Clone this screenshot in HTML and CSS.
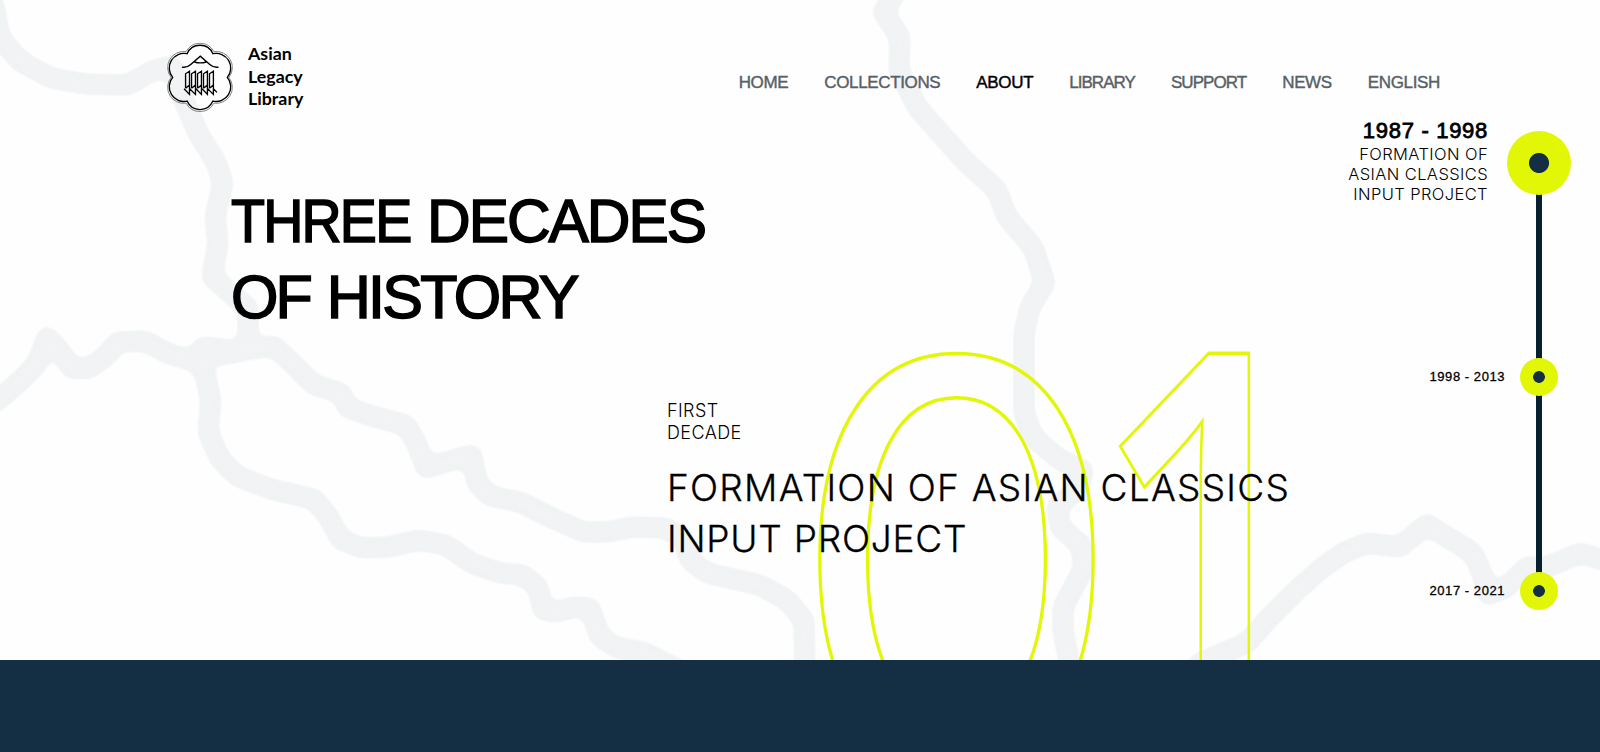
FILE: index.html
```html
<!DOCTYPE html>
<html lang="en">
<head>
<meta charset="utf-8">
<title>Asian Legacy Library</title>
<link rel="stylesheet" href="styles.css">
</head>
<body>
<main class="hero">
  <svg class="map" viewBox="0 0 1600 660" aria-hidden="true">
    <defs>
      <filter id="smooth" filterUnits="userSpaceOnUse" x="-40" y="-40" width="1680" height="740" color-interpolation-filters="sRGB">
        <feGaussianBlur stdDeviation="5"/>
        <feComponentTransfer><feFuncA type="linear" slope="5" intercept="-1.9"/></feComponentTransfer>
      </filter>
    </defs>
    <g filter="url(#smooth)">
    <path d="M-6 5L0 38L20 61L51 78L85 84L128 85L152 71L172 66L184 101L199 135L216 162L223 183L215 216L218 243L212 277L248 308L248 345"/>
    <path d="M-23 411L-3 401L20 381L37 364L47 337L61 352L71 368L88 369L105 357L118 342L145 341L169 354L193 361L203 347L237 351L274 346L297 368L314 385L341 393L348 408L375 417L406 425L416 442L426 468L450 461L472 455L477 483L490 496L520 502L550 517L583 532L607 532L633 527L667 528L683 540L690 560L707 573L760 585L787 600L804 620L805 683"/>
    <path d="M200 363L206 378L211 401L208 432L220 459L237 476L270 489L314 499L328 516L341 540L362 548L389 547L419 540L446 545L473 564L500 573L523 575L538 587L543 610L557 612L573 607L590 608L600 637L617 648L643 652L683 672"/>
    <path d="M195 359L210 356L237 352"/>
    <path d="M903 -23L893 -3L883 12L900 37L899 70L917 107L940 133L967 163L997 190L1007 217L1033 247L1045 283L1030 307L1024 333L1024 413L1033 437L1060 460L1083 470L1080 487L1057 507L1060 527L1083 547L1083 570L1063 607L1063 630L1073 683"/>
    <path d="M1180 683L1200 663L1247 643L1267 620L1297 590L1323 567L1345 552L1367 543L1400 547L1427 524L1447 537L1473 553L1482 573L1488 595L1507 587L1527 567L1547 567L1580 553L1620 565"/>
    </g>
  </svg>

  <header class="header">
    <a class="logo">
      <svg class="logo-mark" viewBox="167 42.200 66 69.800" aria-hidden="true">
        <path class="rim" d="M186.500 52.500A15.300 15.300 0 0 1 213.500 52.500A15.500 15.500 0 0 1 228 77.500A15.500 15.500 0 0 1 213.500 102.500A15.300 15.300 0 0 1 186.500 102.500A15.500 15.500 0 0 1 172 77.500A15.500 15.500 0 0 1 186.500 52.500Z"/>
        <path class="petal" d="M187.500 54.500A13.600 13.600 0 0 1 212.500 54.500A14.200 14.200 0 0 1 226.500 77.500A14.200 14.200 0 0 1 212.500 100.500A13.600 13.600 0 0 1 187.500 100.500A14.200 14.200 0 0 1 173.500 77.500A14.200 14.200 0 0 1 187.500 54.500Z"/>
        <path class="roof" d="M182.500 67.500Q187 68.500 191 65L200.300 57L209.500 65Q213.500 68.500 218 67.500M194.500 62.500Q200.300 64.300 206 62.500"/>
        <path class="pillar" d="M186 88V74L189.800 71.500V94L184.500 88.500M191.800 88V74L195.600 71.500V94L190 88.500M197.600 88V74L201.400 71.500V94L196 88.500M203.400 88V74L207.200 71.500V94L202 88.500M209.200 88V74L213 71.500V94L207.500 88.500M213 88.500L216.500 92M186 88l3.800-3M191.800 88l3.800-3M197.600 88l3.800-3M203.400 88l3.800-3M209.200 88l3.800-3"/>
      </svg>
      <span class="logo-text">Asian<br>Legacy<br>Library</span>
    </a>
    <nav class="nav">
      <a>HOME</a><a>COLLECTIONS</a><a class="active">ABOUT</a><a class="tight">LIBRARY</a><a class="tight">SUPPORT</a><a>NEWS</a><a>ENGLISH</a>
    </nav>
  </header>

  <h1 class="title"><span class="w-three">THREE</span> <span class="w-decades">DECADES</span><br>OF <span class="w-history">HISTORY</span></h1>

  <section class="decade">
    <div class="number" aria-hidden="true"><span class="zero">0</span><span class="one">1</span></div>
    <p class="eyebrow">FIRST<br>DECADE</p>
    <h2 class="subtitle"><span>FORMATION OF ASIAN CLASSICS</span><br>INPUT PROJECT</h2>
  </section>

  <aside class="timeline">
    <div class="stop current">
      <div class="label"><strong>1987 - 1998</strong><span>FORMATION OF<br>ASIAN CLASSICS<br>INPUT PROJECT</span></div>
      <i class="dot"></i>
    </div>
    <div class="stop"><div class="label">1998 - 2013</div><i class="dot"></i></div>
    <div class="stop"><div class="label">2017 - 2021</div><i class="dot"></i></div>
  </aside>
</main>
<section class="band"></section>
</body>
</html>
```
FILE: styles.css
```css
* { box-sizing: border-box; }
body {
  margin: 0;
  height: 752px;
  overflow: hidden;
  background: #fefefe;
  color: #000;
  font-family: "Liberation Sans", Arial, sans-serif;
}
h1, h2, p { margin: 0; font-weight: 400; }

.hero { position: relative; height: 660px; overflow: hidden; }
.band { height: 92px; background: #142f44; }

/* River map behind the content */
.map { position: absolute; inset: 0; width: 1600px; height: 660px; }
.map path {
  fill: none;
  stroke: #f1f3f4;
  stroke-width: 21;
  stroke-linejoin: round;
  stroke-linecap: round;
}

.header {
  position: relative;
  display: flex;
  justify-content: space-between;
  padding: 41px 160px 0 166px;
  height: 113px;
}
.logo { display: flex; gap: 14px; }
.logo-mark { width: 68px; height: 72px; fill: none; stroke: #000; }
.rim { stroke: #555; stroke-width: .7; }
.petal { stroke-width: 1.3; }
.roof { stroke-width: 1.4; }
.pillar { stroke-width: 1.3; }
.logo-text {
  padding-top: 1px;
  font: 700 17.8px/22.5px Lato, sans-serif;
}
.nav { display: flex; gap: 36px; padding-top: 32px; }
.nav a {
  font-size: 17px;
  line-height: 20px;
  letter-spacing: -.35px;
  color: #566066;
  -webkit-text-stroke: .4px currentColor;
}
.nav .active { color: #000; }
.nav .tight { letter-spacing: -.95px; }

.title {
  position: relative;
  margin: 70px 0 0 231px;
  font-size: 61px;
  line-height: 76px;
  letter-spacing: -3px;
  -webkit-text-stroke: 1.6px #000;
}
.title span { display: inline-block; transform-origin: left; }
.w-three { letter-spacing: -2px; margin-right: -15px; transform: scaleX(.912); }
.w-decades { letter-spacing: -2px; transform: scaleX(.99); }
.w-history { letter-spacing: -2.7px; margin-left: 3px; }

.decade { position: relative; margin: 65px 0 0 667px; }
.eyebrow, .subtitle { position: relative; font-family: Inter, sans-serif; font-weight: 300; }
.eyebrow { font-size: 18px; line-height: 22px; letter-spacing: .4px; }
.subtitle {
  margin-top: 18px;
  font-size: 37px;
  line-height: 51px;
  letter-spacing: .75px;
  -webkit-text-stroke: .3px #000;
}
.subtitle span { letter-spacing: 1.25px; }
.number {
  position: absolute;
  left: 120.5px;
  top: -173px;
  display: flex;
  align-items: flex-start;
  font: 400 550px/665px Inter, sans-serif;
  color: transparent;
  -webkit-text-stroke: 3.4px #e2f705;
}
.number span { transform-origin: left; }
.zero { width: 301.5px; transform: scaleX(.971); }
.one {
  margin-top: -24px;
  font: 600 560px/665px "Open Sans", sans-serif;
  transform: scaleX(.747);
}

.timeline {
  position: absolute;
  top: 113px;
  right: 29px;
  width: 240px;
}
.timeline::before {
  content: "";
  position: absolute;
  left: 205px;
  top: 50px;
  width: 6px;
  height: 428px;
  background: #06202f;
}
.stop {
  position: relative;
  display: flex;
  justify-content: flex-end;
  align-items: center;
  gap: 15px;
  height: 38px;
  padding-right: 13px;
  margin-bottom: 176px;
  font-size: 13px;
  letter-spacing: .55px;
  -webkit-text-stroke: .3px #000;
}
.label { padding-bottom: 1px; }
.stop.current { height: 99px; gap: 19px; padding-right: 0; margin-bottom: 146px; }
.dot {
  width: 38px;
  height: 38px;
  border-radius: 50%;
  background: radial-gradient(circle, #142f44 5.5px, #e2f705 6.2px);
}
.current .dot {
  width: 64px;
  height: 64px;
  background: radial-gradient(circle, #142f44 9.6px, #e2f705 10.4px);
}
.current .label {
  padding-bottom: 4px;
  text-align: right;
  font: 300 16.5px/20px Inter, sans-serif;
  letter-spacing: .4px;
  -webkit-text-stroke: 0;
}
.current strong {
  display: block;
  font: 400 22px/26px "Liberation Sans", sans-serif;
  letter-spacing: .7px;
  -webkit-text-stroke: .8px #000;
}
.current span { display: block; }
```
